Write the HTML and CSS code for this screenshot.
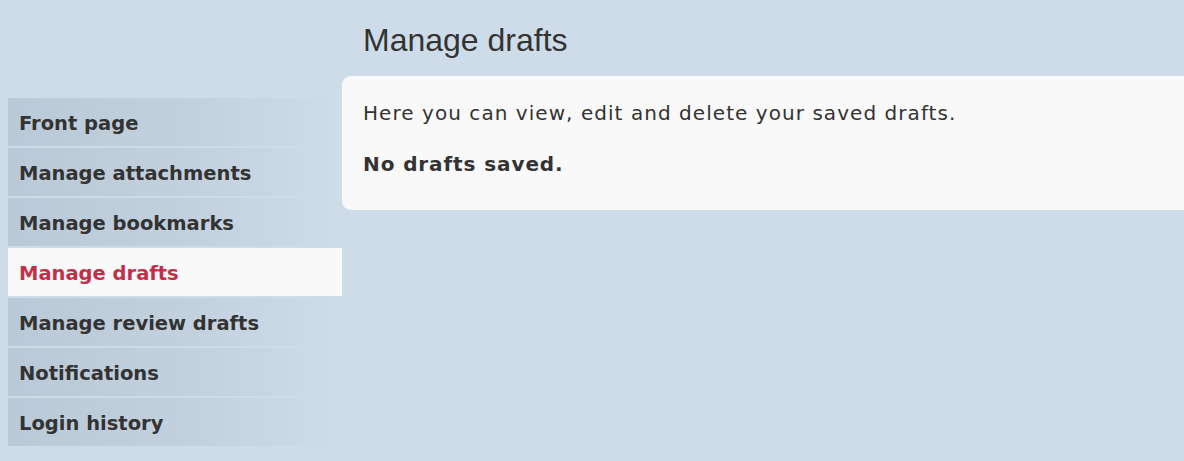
FILE: index.html
```html
<!DOCTYPE html>
<html>
<head>
<meta charset="utf-8">
<link rel="stylesheet" href="styles.css">
</head>
<body>
<div class="page">
  <aside class="sidebar">
    <nav class="nav">
      <a class="nav-item">Front page</a>
      <a class="nav-item">Manage attachments</a>
      <a class="nav-item">Manage bookmarks</a>
      <a class="nav-item active">Manage drafts</a>
      <a class="nav-item">Manage review drafts</a>
      <a class="nav-item">Notifications</a>
      <a class="nav-item">Login history</a>
    </nav>
  </aside>
  <main class="main">
    <h1 class="title">Manage drafts</h1>
    <section class="card">
      <p class="intro">Here you can view, edit and delete your saved drafts.</p>
      <p class="empty">No drafts saved.</p>
    </section>
  </main>
</div>
</body>
</html>
```
FILE: styles.css
```css
html, body {
  margin: 0;
  padding: 0;
  background: #cedce9;
}
body {
  font-family: "DejaVu Sans", Verdana, sans-serif;
  color: #333;
  overflow: hidden;
}
.page {
  display: flex;
  padding-left: 8px;
}
.sidebar {
  width: 334px;
  flex: none;
  padding-top: 98px;
}
.nav {
  display: flex;
  flex-direction: column;
  gap: 2px;
}
.nav-item {
  display: flex;
  align-items: center;
  height: 48px;
  box-sizing: border-box;
  padding: 2px 0 0 11px;
  font-size: 19.5px;
  font-weight: bold;
  color: #333;
  background: linear-gradient(to right, #bac9d7 0%, #c3d1de 55%, #cedce9 97%);
}
.nav-item.active {
  background: #f9f9f9;
  color: #c0304b;
}
.main {
  flex: 1;
  min-width: 0;
}
.title {
  margin: 0;
  height: 76px;
  box-sizing: border-box;
  padding: 22px 0 0 21px;
  font-family: "Liberation Sans", Arial, sans-serif;
  font-weight: normal;
  font-size: 32px;
  color: #333;
}
.card {
  background: #f9f9f9;
  border-radius: 9px 0 0 9px;
  height: 134px;
  box-sizing: border-box;
  padding: 23px 21px 0;
}
.intro {
  margin: 0;
  font-size: 20px;
  letter-spacing: 1.05px;
  line-height: 28px;
}
.empty {
  margin: 23px 0 0;
  font-size: 20px;
  letter-spacing: 0.9px;
  font-weight: bold;
  line-height: 28px;
}
```
